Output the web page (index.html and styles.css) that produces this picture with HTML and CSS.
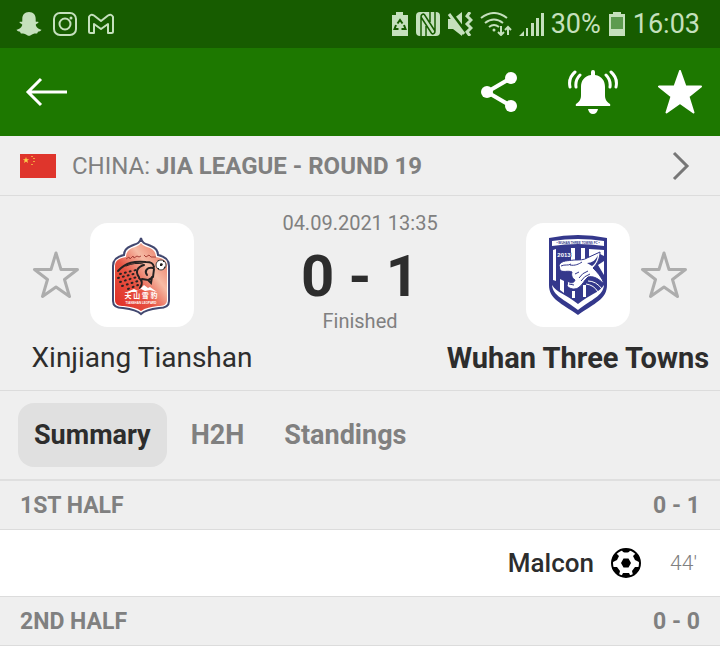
FILE: index.html
```
<!DOCTYPE html>
<html lang="en">

<head>
    <meta charset="UTF-8">
    <meta name="viewport" content="width=device-width, initial-scale=1.0">
    <title>Xinjiang Tianshan - Wuhan Three Towns</title>
    <link rel="stylesheet" href="styles.css">
</head>

<body>

    <!-- phone status bar -->
    <div class="status">
        <div class="status-left">
            <svg width="26" height="26" viewBox="0 0 26 26" fill="currentColor">
                <path d="M13 1C8.500 1 6.300 4 6.300 8v2.500C5.500 11 4.300 10.300 3.500 11c-.5.8 1.700 1.600 2.700 2.400C6.500 15.500 3.500 18 .5 18.800c.2 1.400 2.700 1.600 3.500 2 .5.500.3 1.600 1.200 1.700 1.500 0 2.800-.4 4.300.8 1.300.9 2.200 1.500 3.500 1.500s2.200-.6 3.500-1.500c1.500-1.200 2.800-.8 4.300-.8.9-.1.7-1.200 1.200-1.700.8-.4 3.300-.6 3.500-2-3-.8-6-3.300-5.700-5.400 1-.8 3.200-1.600 2.700-2.400-.8-.7-2 0-2.800-.5V8c0-4-2.200-7-6.700-7z"/>
            </svg>
            <svg width="24" height="24" viewBox="0 0 24 24" fill="none" stroke="currentColor" stroke-width="2">
                <rect x="1" y="1" width="22" height="22" rx="6"/>
                <circle cx="12" cy="12" r="5.500"/>
                <circle cx="18" cy="6" r="1.500" fill="currentColor" stroke="none"/>
            </svg>
            <!-- gmail: outlined M -->
            <svg width="26" height="22" viewBox="0 0 26 22" fill="none" stroke="currentColor" stroke-width="2" stroke-linejoin="round">
                <path d="M1 4v14.500Q1 20 2.500 20H6v-9l7 5 7-5v9h3.500q1.500 0 1.500-1.500V4q-1.500-3.500-5-1.500L13 8 6 2.500Q2.500.5 1 4z"/>
            </svg>
        </div>
        <div class="status-right">
            <svg width="18" height="24" viewBox="0 0 18 24">
                <path fill="currentColor" d="M5 0h7v3h5v21H1V3h4z"/>
                <path fill="none" stroke="#175c00" stroke-width="2" d="M6.500 11.500L9 8l2.500 3.500M13 13l1.500 4h-4M7.500 17H3.500L5 13"/>
            </svg>
            <svg width="24" height="24" viewBox="0 0 24 24">
                <rect width="24" height="24" rx="4" fill="currentColor"/>
                <path fill="none" stroke="#175c00" stroke-width="1.500" d="M5 24V5Q5 2 8 2M19 0v19q0 3-3 3M8 2l11 17M5 5l11 17M10 14v10M14 0v10"/>
            </svg>
            <svg width="26" height="24" viewBox="0 0 26 24">
                <path fill="currentColor" d="M1 7h5l9-7v24l-9-7H1z"/>
                <path stroke="#175c00" stroke-width="4" d="M3 0l16 21"/>
                <path stroke="currentColor" stroke-width="3" d="M2 2l15 20"/>
                <path fill="none" stroke="currentColor" stroke-width="3" d="M23 0l-3 4 4 4-4 4 4 4-4 4 3 4"/>
            </svg>
            <svg width="32" height="24" viewBox="0 0 32 24" fill="none" stroke="currentColor" stroke-width="2">
                <path d="M1 6q13-10 26 0M5 11q9-7 18 0M9 15q5-4 10 0"/>
                <circle cx="14" cy="18" r="1.500" fill="currentColor" stroke="none"/>
                <path d="M21 14v9M18 20l3 3 3-3M28 23v-8M25 18l3-3 3 3"/>
            </svg>
            <svg width="25" height="24" viewBox="0 0 25 24" fill="currentColor">
                <path d="M0 24l5-5v5zM7 16h2v8H7zM12 11h3v13h-3zM17 6h3v18h-3zM22 1h3v23h-3z"/>
            </svg>
            <span class="percent">30%</span>
            <svg width="18" height="24" viewBox="0 0 18 24">
                <path fill="currentColor" d="M5 0h8v2h4v22H1V2h4z"/>
                <path fill="#5d9b50" d="M3 5h12v12H3z"/>
            </svg>
            <span class="clock">16:03</span>
        </div>
    </div>

    <header class="toolbar">
        <button type="button" class="icon-btn" aria-label="Back">
            <svg width="44" height="32" viewBox="0 0 44 32" fill="none" stroke="#fff" stroke-width="3">
                <path d="M43 16H4M17 3L4 16l13 13"/>
            </svg>
        </button>
        <div class="actions">
            <button type="button" class="icon-btn" aria-label="Share">
                <svg width="48" height="44" viewBox="0 0 48 44" fill="#fff">
                    <path d="M30 8L6 22l24 14" fill="none" stroke="#fff" stroke-width="4"/>
                    <circle cx="6" cy="22" r="6"/>
                    <circle cx="30" cy="8" r="6"/>
                    <circle cx="30" cy="36" r="6"/>
                </svg>
            </button>
            <button type="button" class="icon-btn" aria-label="Notifications">
                <svg width="52" height="44" viewBox="0 0 52 44" fill="#fff">
                    <path d="M26 0q2 0 2 2v3c7 1 10 6 10 12v8c0 4 1 6 5 9q1 2-1 2H10q-2 0-1-2c4-3 5-5 5-9v-8c0-6 3-11 10-12V2q0-2 2-2zM21 39h10q-1 5-5 5t-5-5z"/>
                    <path d="M8 2Q1 8 3 17M13 5Q8 10 9 17M44 2q7 6 5 15M39 5q5 5 4 12" fill="none" stroke="#fff" stroke-width="3" stroke-linecap="round"/>
                </svg>
            </button>
            <button type="button" class="icon-btn" aria-label="Favourite">
                <svg width="46" height="44" viewBox="0 0 46 44" fill="#fff" stroke="#fff" stroke-width="2" stroke-linejoin="round">
                    <path d="M23 1l5.500 15.500H44L31.500 26.500 36.500 42.500 23 33 9.500 42.500l5-16L2 16.500h15.500z"/>
                </svg>
            </button>
        </div>
    </header>

    <main>
        <a href="#" class="league">
            <svg width="36" height="24" viewBox="0 0 36 24">
                <rect width="36" height="24" fill="#df352c"/>
                <path fill="#fbd24b" d="M6 3l.8 2.200h2.400L7.300 6.600 8 9 6 7.500 4 9l.7-2.400-1.900-1.400h2.400z"/>
                <path fill="#f3a23d" d="M11 2h2v1h-2zM13 4h2v1h-2zM13 7h2v1h-2zM11 10h2v1h-2z"/>
            </svg>
            <span class="league-name">CHINA: <b>JIA LEAGUE - ROUND 19</b></span>
            <svg width="18" height="30" viewBox="0 0 18 30" fill="none" stroke="#777" stroke-width="3">
                <path d="M2 2l13 13L2 28"/>
            </svg>
        </a>

        <section class="match">
            <div class="team home">
                <div class="team-row">
                    <button type="button" class="icon-btn star" aria-label="Follow Xinjiang Tianshan">
                        <svg width="48" height="50" viewBox="0 0 48 50" fill="none" stroke="#adadad" stroke-width="3" stroke-linejoin="round">
                            <path d="M24 3l5 16.500h16.500L32.500 29.500 37.500 46.500 24 37 10.500 46.500l5-17L2.500 19.500H19z"/>
                        </svg>
                    </button>
                    <div class="logo">
                        <svg width="104" height="104" viewBox="0 0 104 104">
                            <defs>
                                <linearGradient id="red" x1="0" y1="1" x2="1" y2="0">
                                    <stop offset="0" stop-color="#df2923"/>
                                    <stop offset=".4" stop-color="#e75443"/>
                                    <stop offset=".65" stop-color="#f6bba5"/>
                                    <stop offset="1" stop-color="#e66450"/>
                                </linearGradient>
                            </defs>
                            <path fill="#fff" stroke="#41476f" stroke-width="2" d="M51 15c1 6 6 6 10 8 5 2 7 5 7 9 5 1 11 3 11 11v35c0 6-5 7-10 7-8 1-14 2-18 6-4-4-10-5-18-6-5 0-10-1-10-7V43c0-8 6-10 11-11 0-4 2-7 7-9 4-2 9-2 10-8z"/>
                            <path fill="url(#red)" d="M51 20c2 3 6 4 9 5 4 2 6 5 6 9 6 1 11 3 11 9v34c0 5-4 6-9 6-7 1-13 2-17 5-4-3-10-4-17-5-5 0-9-1-9-6V43c0-6 5-8 11-9 0-4 2-7 6-9 3-1 7-2 9-5z"/>
                            <path fill="none" stroke="#a8433a" stroke-width="1" d="M36 36l3-2 1 2 3-3 1 2 3-2 2 1 2-1M54 32l2 2 3-2 2 2 5 0"/>
                            <path fill="none" stroke="#262222" stroke-width="2" stroke-linecap="round" d="M28 48c8-9 17-10 28-9 5 0 7 1 8 5M54 42c-7 2-9 7-5 12M63 45c-6-1-9 3-6 7M64 46l-1 8-5 3-6-1M62 54l-1 6-3-3M49 55c4 3 3 7 1 10"/>
                            <path fill="none" stroke="#262222" stroke-width="1" stroke-linecap="round" d="M36 43q9-4 17-2"/>
                            <path fill="none" stroke="#262222" stroke-width="2" stroke-linecap="round" stroke-dasharray="1 4" d="M30 51l16-4M28 55l19-5M30 59l17-5M32 63l16-5M38 66l10-4"/>
                            <path fill="#fff" d="M37 69l7-3 4 2 6-6 4 3 2-1 7 5-7-2-5 1-4-2-5 3z"/>
                            <circle cx="71" cy="42" r="5" fill="#fff" stroke="#444" stroke-width="1"/>
                            <path fill="#222" d="M70 41l1-1 2 1-1 2h-2zM67 38l2-1 0 1zM73 37l2 2-2 0zM67 45l2 0 0 2zM75 43l0 2-2 1z"/>
                            <text x="51" y="75" class="crest-cn">天 山 雪 豹</text>
                            <text x="51" y="81" class="crest-small">TIANSHAN LEOPARD</text>
                        </svg>
                    </div>
                </div>
                <div class="team-name">Xinjiang Tianshan</div>
            </div>

            <div class="result">
                <div class="info">04.09.2021 13:35</div>
                <div class="score">0 - 1</div>
                <div class="info">Finished</div>
            </div>

            <div class="team away">
                <div class="team-row">
                    <div class="logo">
                        <svg width="104" height="104" viewBox="0 0 104 104">
                            <path fill="#34388c" d="M23 15q29-6 58 0v47c0 14-12 18-29 30C35 80 23 76 23 62z"/>
                            <path fill="#fff" d="M26 18q26-4 52 0v5q-26-4-52 0z"/>
                            <!-- stripes behind the panther -->
                            <path fill="#fff" d="M27 27l3-1v32l-3-1zM45 25h4v14h-4zM55 25h4v12h-4zM63 26l15 1v6l-6-3-9 4zM72 42l6-4v14zM34 56l4 2v12l-4-3zM46 68h3v7h-3zM57 62h3v12h-3z"/>
                            <path fill="#fff" stroke="#34388c" stroke-width="1" d="M33 42c3-5 9-4 15-5 6 0 10 0 13-2l13-6c0 7-3 12-7 16 4 4 9 9 11 16-7-7-12-8-16-7-4 3-5 8-10 11-4 2-8 1-11-2l1-5c3 3 6 2 7-1-3-2-4-5-3-8-4-2-9 1-12-2z"/>
                            <path fill="#34388c" d="M61 40c5 0 9-3 11-8-1 6-3 9-6 11z"/>
                            <path fill="none" stroke="#34388c" stroke-width="1" d="M35 43c4-2 7 0 10-2M44 42c5 1 9-1 12-3M53 55q3-5 9-7M55 58q3-5 9-7M49 51l4-2M43 61l5 1"/>
                            <path fill="none" stroke="#fff" stroke-width="1" d="M62 58q8 0 14 8M60 61q8 1 12 8"/>
                            <path fill="#fff" d="M26 62c5 8 14 9 26 19 12-10 21-11 26-19-1 11-12 14-26 25C38 76 27 73 26 62z"/>
                            <text x="52" y="21" class="crest-fc">• WUHAN THREE TOWNS FC •</text>
                            <text x="38" y="34" class="crest-year">2013</text>
                        </svg>
                    </div>
                    <button type="button" class="icon-btn star" aria-label="Follow Wuhan Three Towns">
                        <svg width="48" height="50" viewBox="0 0 48 50" fill="none" stroke="#adadad" stroke-width="3" stroke-linejoin="round">
                            <path d="M24 3l5 16.500h16.500L32.500 29.500 37.500 46.500 24 37 10.500 46.500l5-17L2.500 19.500H19z"/>
                        </svg>
                    </button>
                </div>
                <div class="team-name winner">Wuhan Three Towns</div>
            </div>
        </section>

        <nav class="tabs">
            <button type="button" class="tab active">Summary</button>
            <button type="button" class="tab">H2H</button>
            <button type="button" class="tab">Standings</button>
        </nav>

        <section>
            <h2 class="period"><span>1ST HALF</span><span class="period-score">0 - 1</span></h2>
            <div class="event">
                <span class="player">Malcon</span>
                <svg width="32" height="32" viewBox="0 0 32 32">
                    <circle cx="16" cy="16" r="14" fill="#fff" stroke="#000" stroke-width="2"/>
                    <path d="M13.500 11.500h5l2.500 4.500-2.500 4.500h-5L11 16zM11 2h10l-2 3q-3 1-6 0zM3 11l3-5 3 3-2 4-4 2zM29 11l-3-5-3 3 2 4 4 2zM2 20l5 0 3 4-1 4q-5-3-7-8zM30 20l-5 0-3 4 1 4q5-3 7-8zM13 26h6l2 4H11z"/>
                </svg>
                <span class="minute">44'</span>
            </div>
            <h2 class="period"><span>2ND HALF</span><span class="period-score">0 - 0</span></h2>
        </section>
    </main>

</body>

</html>
```
FILE: styles.css
```
* {
    box-sizing: border-box;
}

body {
    margin: 0;
    background: #fff;
    color: #2d2d2d;
    font-family: Roboto, "Liberation Sans", sans-serif;
}

button {
    border: 0;
    padding: 0;
    background: none;
    font-family: inherit;
    cursor: pointer;
}

svg {
    display: block;
    flex: none;
}

.status {
    display: flex;
    justify-content: space-between;
    align-items: center;
    height: 48px;
    padding: 0 20px 0 16px;
    background: #175c00;
    color: #c5e0bd;
}

.status-left {
    display: flex;
    align-items: center;
    gap: 11px;
}

.status-right {
    display: flex;
    align-items: center;
    gap: 7px;
    font-size: 27px;
    line-height: 32px;
}

.toolbar {
    display: flex;
    justify-content: space-between;
    align-items: center;
    height: 88px;
    padding: 0 17px 0 24px;
    background: #1d7800;
}

.actions {
    display: flex;
    align-items: center;
    gap: 38px;
}

.league {
    display: flex;
    align-items: center;
    gap: 16px;
    height: 60px;
    padding: 0 30px 0 20px;
    background: #efefef;
    border-bottom: 1px solid #dcdcdc;
    color: #808080;
    font-size: 24px;
    text-decoration: none;
}

.league-name {
    flex: 1;
}

.match {
    display: grid;
    grid-template-columns: 1fr 152px 1fr;
    padding: 12px 0 13px;
    background: #efefef;
    border-bottom: 1px solid #dcdcdc;
}

.team {
    display: flex;
    flex-direction: column;
    align-items: center;
    padding-top: 15px;
}

.team-row {
    display: grid;
    grid-template-columns: 48px 104px 48px;
    gap: 10px;
    align-items: center;
}

.logo {
    grid-column: 2;
    background: #fff;
    border-radius: 18px;
}

.team-name {
    margin-top: 12px;
    font-size: 28px;
    line-height: 38px;
    white-space: nowrap;
}

.winner {
    font-size: 29px;
    font-weight: bold;
}

.result {
    display: flex;
    flex-direction: column;
    align-items: center;
    white-space: nowrap;
}

.info {
    color: #808080;
    font-size: 20px;
    line-height: 30px;
}

.score {
    margin-top: 8px;
    font-size: 58px;
    font-weight: bold;
    line-height: 60px;
}

.tabs {
    display: flex;
    gap: 8px;
    padding: 12px 18px;
    background: #efefef;
    border-bottom: 2px solid #dfdfdf;
}

.tab {
    height: 64px;
    padding: 0 16px;
    border-radius: 16px;
    color: #808080;
    font-size: 27px;
    font-weight: bold;
}

.active {
    background: #e0e0e0;
    color: #2d2d2d;
}

.period {
    display: flex;
    justify-content: space-between;
    align-items: center;
    height: 49px;
    margin: 0;
    padding: 0 20px;
    background: #efefef;
    border-bottom: 1px solid #dcdcdc;
    color: #808080;
    font-size: 23px;
}

.event {
    display: flex;
    justify-content: flex-end;
    align-items: center;
    height: 67px;
    padding: 0 23px;
    border-bottom: 1px solid #dcdcdc;
}

.player {
    margin-right: 16px;
    font-size: 26px;
    font-weight: 500;
}

.minute {
    width: 55px;
    color: #808080;
    font-size: 21px;
    font-weight: 300;
    text-align: right;
}

/* lettering inside the crests */
.crest-cn {
    fill: #fff;
    font: bold 7px "Noto Sans CJK SC", sans-serif;
    text-anchor: middle;
}

.crest-small {
    fill: #fff;
    font: bold 3px "Liberation Sans", sans-serif;
    text-anchor: middle;
}

.crest-fc {
    fill: #34388c;
    font: bold 3px "Liberation Sans", sans-serif;
    text-anchor: middle;
}

.crest-year {
    fill: #fff;
    stroke: #34388c;
    stroke-width: 2px;
    paint-order: stroke;
    font: bold 6px "Liberation Sans", sans-serif;
    text-anchor: middle;
}
```
